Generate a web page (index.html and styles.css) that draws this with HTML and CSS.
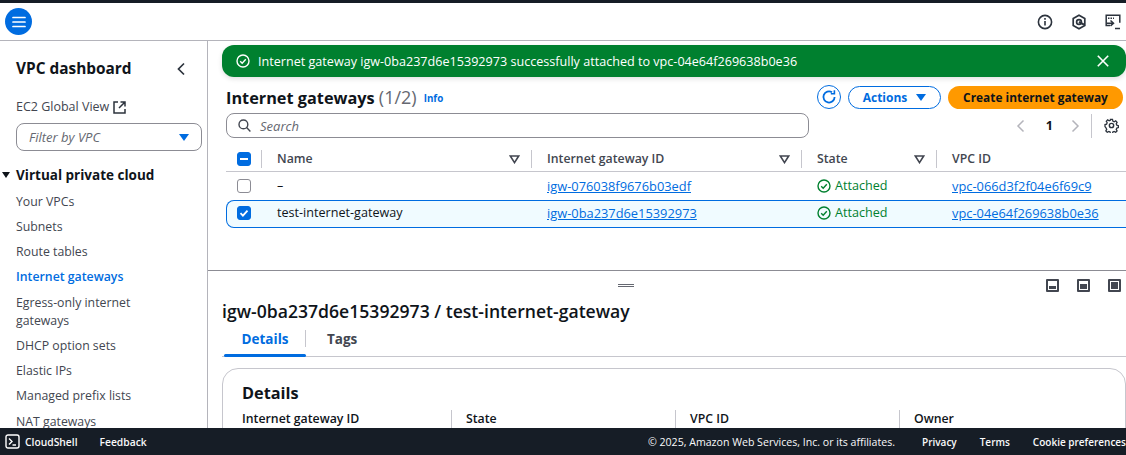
FILE: index.html
```html
<!DOCTYPE html>
<html lang="en">
<head>
  <meta charset="UTF-8">
  <title>Internet gateways | VPC Console</title>
  <link rel="stylesheet" href="styles.css">
</head>
<body>
  <div class="page">
    <!-- Top bar -->
    <header class="topbar">
      <button class="menu-btn">
        <svg width="14" height="12" viewBox="0 0 14 12"><path d="M1 1.5h12M1 6h12M1 10.5h12" stroke="#fff" stroke-width="1.7" stroke-linecap="round"/></svg>
      </button>
      <div class="top-icons">
        <svg width="16" height="16" viewBox="0 0 16 16" fill="none" stroke="#2c333d" stroke-width="1.6"><circle cx="8" cy="8" r="6.6"/><path d="M8 7v4.5M8 4v1.8"/></svg>
        <svg width="16" height="16" viewBox="0 0 16 16" fill="none" stroke="#2c333d" stroke-width="1.7"><path d="M8 1.3l5.8 3.2v7L8 14.7l-5.8-3.2v-7z"/><circle cx="8" cy="8" r="2.4"/><path d="M8 8l5 2.6" stroke-width="2"/></svg>
        <svg width="16" height="16" viewBox="0 0 16 16" fill="none" stroke="#2c333d" stroke-width="1.5"><path d="M5 11.5H1.2V1.2h13.6v7.6"/><path d="M3 4.2h6" stroke-dasharray="1.5 1" stroke-width="1.6"/><path d="M5.5 6.5l3 2.7-3 2.7M1.5 9.2h7M10 14.5h5"/></svg>
      </div>
    </header>

    <div class="layout">
      <!-- Side navigation -->
      <nav class="sidenav">
        <div class="nav-head">
          <h2>VPC dashboard</h2>
          <svg width="10" height="14" viewBox="0 0 10 14" fill="none" stroke="#2c333d" stroke-width="1.7"><path d="M8 1.5L2.5 7 8 12.5"/></svg>
        </div>
        <div class="global-view">
          EC2 Global View
          <svg width="13" height="13" viewBox="0 0 13 13" fill="none" stroke="#2c333d" stroke-width="1.5"><path d="M5 1H1v11h11V8M7.5 1H12v4.5M12 1L6 7"/></svg>
        </div>
        <div class="vpc-filter">
          <span>Filter by VPC</span>
          <i class="caret"></i>
        </div>
        <div class="nav-section">
          <i class="caret-dark"></i>Virtual private cloud
        </div>
        <ul class="nav-list">
          <li>Your VPCs</li>
          <li>Subnets</li>
          <li>Route tables</li>
          <li class="active">Internet gateways</li>
          <li class="two-line">Egress-only internet gateways</li>
          <li>DHCP option sets</li>
          <li>Elastic IPs</li>
          <li>Managed prefix lists</li>
          <li>NAT gateways</li>
        </ul>
      </nav>

      <main class="content">
        <div class="list-pane">
          <div class="flash">
            <svg width="14" height="14" viewBox="0 0 14 14" fill="none" stroke="#fff" stroke-width="1.4"><circle cx="7" cy="7" r="6"/><path d="M4.2 7.2l2 2 3.6-4"/></svg>
            <span class="flash-text">Internet gateway igw-0ba237d6e15392973 successfully attached to vpc-04e64f269638b0e36</span>
            <svg width="12" height="12" viewBox="0 0 12 12" stroke="#fff" stroke-width="1.6"><path d="M.8.8l10.4 10.4M11.2.8L.8 11.2"/></svg>
          </div>

          <div class="list-head">
            <h1>Internet gateways <span class="count">(1/2)</span></h1>
            <a class="info">Info</a>
            <div class="actions">
              <button class="btn-refresh">
                <svg width="16" height="16" viewBox="0 0 16 16" fill="none" stroke="#006ce0" stroke-width="1.8"><path d="M13.6 8A5.6 5.6 0 1 1 11 3.2"/><path d="M13.4 1.2v3.6H9.8" stroke-width="1.6"/></svg>
              </button>
              <button class="btn-actions">Actions<i class="caret"></i></button>
              <button class="btn-primary">Create internet gateway</button>
            </div>
          </div>

          <div class="search-row">
            <div class="search">
              <svg width="13" height="13" viewBox="0 0 13 13" fill="none" stroke="#424650" stroke-width="1.4"><circle cx="5.4" cy="5.4" r="4.4"/><path d="M8.6 8.6L12.4 12.4"/></svg>
              <span>Search</span>
            </div>
            <div class="pager">
              <svg width="9" height="14" viewBox="0 0 9 14" fill="none" stroke="#b4b4bb" stroke-width="1.5"><path d="M7.5 1.5L2 7l5.5 5.5"/></svg>
              <span>1</span>
              <svg width="9" height="14" viewBox="0 0 9 14" fill="none" stroke="#b4b4bb" stroke-width="1.5"><path d="M1.5 1.5L7 7l-5.5 5.5"/></svg>
              <div class="pager-sep"></div>
              <svg width="15" height="15" viewBox="0 0 16 16" fill="none" stroke="#2c333d" stroke-width="1.5"><circle cx="8" cy="8" r="2.3"/><path d="M6.8 1h2.4l.4 2 1.5.7 1.8-1 1.6 1.7-1 1.7.7 1.6 1.8.5v2.3l-1.8.5-.7 1.6 1 1.7-1.6 1.6-1.8-1-1.5.7-.4 2H6.8l-.4-2-1.5-.7-1.8 1-1.6-1.6 1-1.7-.7-1.6L.5 9.3V7l1.8-.5.7-1.6-1-1.7 1.6-1.7 1.8 1 1.5-.7z" transform="translate(.6 .6) scale(.92)"/></svg>
            </div>
          </div>

          <div class="table">
            <div class="row row-head">
              <div class="cell cell-check"><span class="check check-on"><i class="dash"></i></span></div>
              <div class="cell cell-name">Name
                <svg class="sort" width="11" height="9" viewBox="0 0 11 9" fill="none" stroke="#424650" stroke-width="1.6"><path d="M1.3 1h8.4L5.5 7.6z"/></svg>
              </div>
              <div class="cell cell-id">Internet gateway ID
                <svg class="sort" width="11" height="9" viewBox="0 0 11 9" fill="none" stroke="#424650" stroke-width="1.6"><path d="M1.3 1h8.4L5.5 7.6z"/></svg>
              </div>
              <div class="cell cell-state">State
                <svg class="sort" width="11" height="9" viewBox="0 0 11 9" fill="none" stroke="#424650" stroke-width="1.6"><path d="M1.3 1h8.4L5.5 7.6z"/></svg>
              </div>
              <div class="cell cell-vpc">VPC ID</div>
            </div>
            <div class="row">
              <div class="cell cell-check"><span class="check"></span></div>
              <div class="cell cell-name">–</div>
              <div class="cell cell-id"><a>igw-076038f9676b03edf</a></div>
              <div class="cell cell-state attached">
                <svg width="14" height="14" viewBox="0 0 14 14" fill="none" stroke="#00802f" stroke-width="1.4"><circle cx="7" cy="7" r="6"/><path d="M4.2 7.2l2 2 3.6-4"/></svg>Attached
              </div>
              <div class="cell cell-vpc"><a>vpc-066d3f2f04e6f69c9</a></div>
            </div>
            <div class="row row-selected">
              <div class="cell cell-check">
                <span class="check check-on"><svg width="10" height="10" viewBox="0 0 10 10" fill="none" stroke="#fff" stroke-width="1.8"><path d="M1.5 5.2l2.4 2.4 4.6-5"/></svg></span>
              </div>
              <div class="cell cell-name">test-internet-gateway</div>
              <div class="cell cell-id"><a>igw-0ba237d6e15392973</a></div>
              <div class="cell cell-state attached">
                <svg width="14" height="14" viewBox="0 0 14 14" fill="none" stroke="#00802f" stroke-width="1.4"><circle cx="7" cy="7" r="6"/><path d="M4.2 7.2l2 2 3.6-4"/></svg>Attached
              </div>
              <div class="cell cell-vpc"><a>vpc-04e64f269638b0e36</a></div>
            </div>
          </div>
        </div>

        <!-- Split panel -->
        <section class="split">
          <div class="split-bar">
            <i class="handle"></i>
            <div class="split-icons">
              <span class="pos pos-low"></span>
              <span class="pos pos-mid"></span>
              <span class="pos pos-full"></span>
            </div>
          </div>
          <h2 class="split-title">igw-0ba237d6e15392973 / test-internet-gateway</h2>
          <div class="tabs">
            <div class="tab tab-active">Details</div>
            <div class="tab">Tags</div>
          </div>
          <div class="card">
            <h3>Details</h3>
            <div class="card-grid">
              <div class="field">Internet gateway ID</div>
              <div class="field">State</div>
              <div class="field">VPC ID</div>
              <div class="field">Owner</div>
            </div>
          </div>
        </section>
      </main>
    </div>

    <footer class="footer">
      <div class="foot-left">
        <svg width="15" height="15" viewBox="0 0 15 15" fill="none" stroke="#fff" stroke-width="1.4"><rect x="1" y="1" width="13" height="13" rx="2"/><path d="M4 4.5L7 7.5 4 10.5M7.5 11h3.5"/></svg>
        <span>CloudShell</span>
        <span class="feedback">Feedback</span>
      </div>
      <div class="foot-right">
        <span class="copy">© 2025, Amazon Web Services, Inc. or its affiliates.</span>
        <span>Privacy</span>
        <span>Terms</span>
        <span>Cookie preferences</span>
      </div>
    </footer>
  </div>
</body>
</html>
```

FILE: styles.css
```css
* {
  box-sizing: border-box;
}
html, body {
  margin: 0;
  height: 100%;
  overflow: hidden;
}
body {
  font-family: "Open Sans", "Noto Sans", Arial, sans-serif;
  font-size: 12.6px;
  color: #0f141a;
  background: #fff;
}
h1, h2, h3, ul {
  margin: 0;
  padding: 0;
}
button {
  font-family: inherit;
  cursor: pointer;
}
a {
  color: #006ce0;
}

.page {
  width: 1126px;
  height: 455px;
  display: flex;
  flex-direction: column;
  border-top: 3px solid #161d26;
}

/* top bar */
.topbar {
  height: 38px;
  flex: none;
  display: flex;
  align-items: center;
  justify-content: space-between;
  padding: 0 5px;
  border-bottom: 1px solid #b4b4bb;
}
.menu-btn {
  width: 27px;
  height: 27px;
  padding: 0;
  border: none;
  border-radius: 50%;
  background: #006ce0;
  display: flex;
  align-items: center;
  justify-content: center;
}
.top-icons {
  display: flex;
  align-items: center;
  gap: 18px;
}

.layout {
  flex: 1;
  min-height: 0;
  display: flex;
}

/* side navigation */
.sidenav {
  width: 208px;
  flex: none;
  border-right: 1px solid #b4b4bb;
  padding: 17px 5px 0 16px;
  overflow: hidden;
}
.nav-head {
  display: flex;
  align-items: center;
  justify-content: space-between;
  padding-right: 16px;
}
.nav-head h2 {
  font-size: 15.4px;
  line-height: 22px;
  font-weight: 700;
}
.global-view {
  margin-top: 18px;
  display: flex;
  align-items: center;
  gap: 4px;
  font-size: 12.5px;
  line-height: 18px;
  color: #424650;
}
.vpc-filter {
  margin-top: 7px;
  width: 186px;
  height: 28px;
  border: 1px solid #8c8c94;
  border-radius: 8px;
  padding: 0 12px;
  display: flex;
  align-items: center;
  justify-content: space-between;
  font-size: 13px;
  font-style: italic;
  color: #656871;
}
.caret {
  width: 0;
  height: 0;
  border-left: 5px solid transparent;
  border-right: 5px solid transparent;
  border-top: 7px solid #006ce0;
}
.nav-section {
  margin: 14px 0 0 -14px;
  display: flex;
  align-items: center;
  gap: 6px;
  font-size: 13.5px;
  line-height: 20px;
  font-weight: 700;
}
.caret-dark {
  width: 0;
  height: 0;
  border-left: 4px solid transparent;
  border-right: 4px solid transparent;
  border-top: 6px solid #0f141a;
}
.nav-list {
  list-style: none;
  margin-top: 7.5px;
  color: #424650;
  font-size: 12.3px;
  line-height: 18px;
}
.nav-list li {
  margin-bottom: 7.25px;
}
.nav-list .active {
  color: #006ce0;
  font-weight: 600;
}
.nav-list .two-line {
  max-width: 140px;
}

/* main area */
.content {
  flex: 1;
  min-width: 0;
  display: flex;
  flex-direction: column;
  overflow: hidden;
}
.list-pane {
  height: 229px;
  flex: none;
  padding-top: 4px;
}
.flash {
  margin-left: 14px;
  height: 32px;
  background: #00802f;
  border-radius: 12px;
  color: #fff;
  display: flex;
  align-items: center;
  padding: 0 17px 0 14px;
  gap: 8px;
  box-shadow: 0 2px 5px rgba(0, 0, 0, .12);
}
.flash-text {
  flex: 1;
  white-space: nowrap;
}
.list-head {
  margin: 8px 0 0 18px;
  display: flex;
  align-items: center;
  padding-right: 3px;
  height: 24px;
}
.list-head h1 {
  font-size: 16.3px;
  line-height: 24px;
  font-weight: 700;
}
.count {
  font-size: 18px;
  font-weight: 400;
  color: #656871;
}
.info {
  margin: 3px 0 0 7px;
  font-size: 9.8px;
  font-weight: 700;
}
.actions {
  margin-left: auto;
  display: flex;
  align-items: center;
  gap: 7px;
}
.btn-refresh {
  width: 24px;
  height: 24px;
  padding: 0;
  border: 1px solid #006ce0;
  border-radius: 50%;
  background: #fff;
  display: flex;
  align-items: center;
  justify-content: center;
}
.btn-actions {
  width: 93px;
  height: 23px;
  padding: 0;
  border: 1px solid #006ce0;
  border-radius: 12px;
  background: #fff;
  color: #006ce0;
  font-size: 12px;
  font-weight: 700;
  display: flex;
  align-items: center;
  justify-content: center;
  gap: 9px;
}
.btn-primary {
  width: 175px;
  height: 23px;
  padding: 0;
  border: none;
  border-radius: 12px;
  background: #ff9900;
  color: #0f141a;
  font-size: 11.9px;
  font-weight: 700;
}
.search-row {
  margin: 4px 0 0 18px;
  display: flex;
  align-items: center;
  justify-content: space-between;
  padding-right: 7px;
}
.search {
  width: 583px;
  height: 25px;
  border: 1px solid #8c8c94;
  border-radius: 8px;
  display: flex;
  align-items: center;
  gap: 9px;
  padding-left: 11px;
  font-size: 13px;
  font-style: italic;
  color: #656871;
}
.pager {
  display: flex;
  align-items: center;
  font-weight: 700;
}
.pager span {
  margin: 0 18px 0 21px;
}
.pager-sep {
  width: 1px;
  height: 24px;
  background: #c6c6cd;
  margin: 0 12px 0 11px;
}

/* table */
.table {
  margin: 7px -8px 0 18px;
}
.row {
  display: grid;
  grid-template-columns: 35px 270px 270px 135px 1fr;
  height: 28px;
  align-items: center;
  line-height: 18px;
}
.row-head {
  height: 27px;
  padding-top: 2px;
  border-bottom: 1px solid #c6c6cd;
  font-size: 12.3px;
  font-weight: 600;
  color: #424650;
}
.row-selected {
  padding-bottom: 2px;
  background: #f0fbff;
  box-shadow: inset 0 0 0 1px #006ce0;
  border-radius: 8px 0 0 8px;
}
.cell {
  padding-left: 16px;
  white-space: nowrap;
  display: flex;
  align-items: center;
}
.cell a {
  font-size: 12.85px;
  text-decoration: underline;
}
.cell-check {
  padding-left: 11px;
}
.row-head .cell-name,
.row-head .cell-id,
.row-head .cell-state,
.row-head .cell-vpc {
  border-left: 1px solid #c6c6cd;
  height: 18px;
  padding-left: 15px;
}
.sort {
  margin-left: auto;
  margin-right: 11px;
}
.check {
  width: 14px;
  height: 14px;
  border: 1.5px solid #8c8c94;
  border-radius: 3px;
  background: #fff;
  display: flex;
  align-items: center;
  justify-content: center;
}
.check-on {
  background: #006ce0;
  border-color: #006ce0;
}
.dash {
  width: 8px;
  height: 2px;
  background: #fff;
}
.attached {
  color: #00802f;
  gap: 4px;
}

/* split panel */
.split {
  flex: 1;
  min-height: 0;
  border-top: 1px solid #8c8c94;
  padding-left: 14px;
  overflow: hidden;
}
.split-bar {
  height: 27px;
  display: flex;
  align-items: center;
  padding-top: 1px;
}
.handle {
  margin-left: 396px;
  width: 16px;
  height: 3px;
  border-top: 1px solid #656871;
  border-bottom: 1px solid #656871;
}
.split-icons {
  margin-left: auto;
  display: flex;
  gap: 18px;
  padding-right: 5px;
}
.pos {
  width: 13px;
  height: 13px;
  border: 2px solid #424650;
  border-radius: 1px;
  background: #fff;
  position: relative;
}
.pos::after {
  content: "";
  position: absolute;
  left: 1px;
  right: 1px;
  bottom: 1px;
  background: #424650;
}
.pos-low::after {
  height: 3px;
}
.pos-mid::after {
  height: 5px;
}
.pos-full::after {
  height: 7px;
}
.split-title {
  font-size: 17.6px;
  line-height: 24px;
  font-weight: 600;
  margin-top: 1px;
}
.tabs {
  margin-top: 4px;
  display: flex;
  border-bottom: 1px solid #c6c6cd;
  height: 30px;
}
.tab {
  font-size: 13.5px;
  font-weight: 700;
  color: #424650;
  padding: 3px 0 0 21px;
  line-height: 18px;
}
.tab-active {
  color: #006ce0;
  margin-left: 2px;
  width: 82px;
  height: 30px;
  padding-left: 0;
  text-align: center;
  position: relative;
}
.tab-active::before {
  content: "";
  position: absolute;
  left: 0;
  right: 0;
  bottom: 0;
  height: 3px;
  border-radius: 2px;
  background: #006ce0;
}
.tab-active::after {
  content: "";
  position: absolute;
  right: 0;
  top: 3px;
  height: 17px;
  width: 1px;
  background: #c6c6cd;
}
.card {
  margin-top: 11px;
  height: 100px;
  border: 1px solid #c6c6cd;
  border-radius: 16px;
  padding: 12px 19px;
}
.card h3 {
  font-size: 16.3px;
  line-height: 24px;
  font-weight: 700;
}
.card-grid {
  margin-top: 5px;
  display: grid;
  grid-template-columns: 209px 224px 224px 1fr;
  font-size: 12.3px;
  font-weight: 600;
  line-height: 18px;
}
.field {
  padding-left: 14px;
  border-left: 1px solid #c6c6cd;
  height: 30px;
}
.field:first-child {
  padding-left: 0;
  border-left: none;
}

/* footer */
.footer {
  height: 27px;
  flex: none;
  background: #161d26;
  color: #f9f9fa;
  display: flex;
  align-items: center;
  justify-content: space-between;
  padding-left: 5px;
  font-size: 10px;
  font-weight: 600;
  white-space: nowrap;
}
.foot-left {
  display: flex;
  align-items: center;
  gap: 5px;
  font-size: 10.3px;
}
.feedback {
  margin-left: 17px;
}
.foot-right {
  display: flex;
  gap: 23px;
}
.copy {
  font-size: 10.6px;
  font-weight: 400;
  margin-right: 4px;
}
```
